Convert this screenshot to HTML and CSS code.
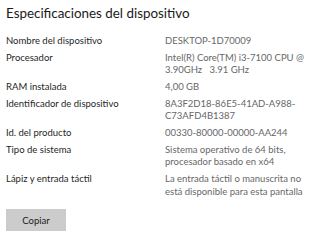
FILE: index.html
```html
<!DOCTYPE html>
<html lang="es">
<head>
<meta charset="utf-8">
<link rel="stylesheet" href="styles.css">
</head>
<body>
<main class="panel">
  <h1 class="title">Especificaciones del dispositivo</h1>
  <dl class="specs">
    <div class="row"><dt>Nombre del dispositivo</dt><dd>DESKTOP-1D70009</dd></div>
    <div class="row"><dt>Procesador</dt><dd>Intel(R) Core(TM) i3-7100 CPU @<br>3.90GHz&nbsp;&nbsp; 3.91 GHz</dd></div>
    <div class="row"><dt>RAM instalada</dt><dd>4,00 GB</dd></div>
    <div class="row"><dt>Identificador de dispositivo</dt><dd>8A3F2D18-86E5-41AD-A988-<br>C73AFD4B1387</dd></div>
    <div class="row"><dt>Id. del producto</dt><dd>00330-80000-00000-AA244</dd></div>
    <div class="row"><dt>Tipo de sistema</dt><dd>Sistema operativo de 64 bits,<br>procesador basado en x64</dd></div>
    <div class="row"><dt>Lápiz y entrada táctil</dt><dd>La entrada táctil o manuscrita no<br>está disponible para esta pantalla</dd></div>
  </dl>
  <button class="copy" type="button">Copiar</button>
</main>
</body>
</html>
```

FILE: styles.css
```css
html, body {
  margin: 0;
  padding: 0;
  background: #ffffff;
}
body {
  font-family: "Lato", "Open Sans", sans-serif;
  width: 320px;
  height: 238px;
  overflow: hidden;
}
.panel {
  padding: 2px 6px 0 6px;
  display: flex;
  flex-direction: column;
  align-items: flex-start;
}
.title {
  margin: 0;
  font-size: 13.4px;
  font-weight: 400;
  line-height: 22px;
  color: #1a1a1a;
}
.specs {
  margin: 11px 0 0 0;
  display: flex;
  flex-direction: column;
  gap: 4.1px;
  width: 100%;
}
.row {
  display: grid;
  grid-template-columns: 159px 1fr;
  font-size: 9.5px;
  line-height: 12.6px;
  white-space: nowrap;
}
.row dt {
  margin: 0;
  color: #1f1f1f;
}
.row dd {
  margin: 0;
  color: #676767;
}
.copy {
  margin-top: 11px;
  width: 60px;
  height: 22px;
  border: none;
  background: #cccccc;
  color: #1a1a1a;
  font-family: inherit;
  font-size: 9.5px;
  padding: 0;
}
```
